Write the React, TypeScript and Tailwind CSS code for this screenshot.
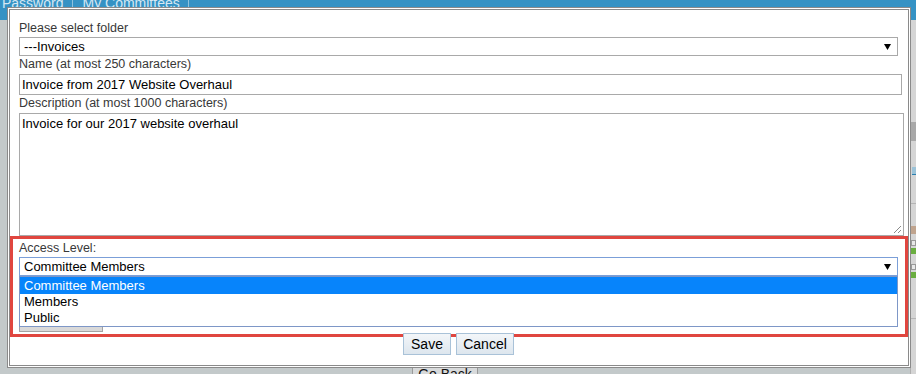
import React from "react";

const font = { fontFamily: '"Liberation Sans", Arial, sans-serif' };

function Arrow() {
  return (
    <svg width="7" height="7" viewBox="0 0 7 7" className="block">
      <path d="M0 1 L7 1 L3.5 7 Z" fill="#000" />
    </svg>
  );
}

function Label({ children, className = "" }: { children: React.ReactNode; className?: string }) {
  return <div className={"h-[15px] leading-[15px] text-[12.5px] text-[#383838] " + className}>{children}</div>;
}

export default function App() {
  return (
    <div style={font} className="relative w-[916px] h-[374px] overflow-hidden bg-[#c3c9ca]">
      {/* page behind the dialog */}
      <div className="h-[20px] bg-[#3592c4] flex items-start text-[14px] text-[#d6e8f3]">
        <div className="relative top-[-5px] pl-[2px] pr-[9px] border-r border-[#8ec2de] h-[20px] leading-[16px]">Password</div>
        <div className="relative top-[-5px] pl-[9px] pr-[8px] border-r border-[#8ec2de] h-[20px] leading-[16px]">My Committees</div>
      </div>
      <div className="absolute left-[910px] top-[20px] w-[6px] h-[354px] bg-[#d5d5d5] border-l border-[#b0b0b0]">
        <div className="mt-[102px] h-[19px] bg-[#a8a8a8]" />
        <div className="mt-[26px] ml-[1px] h-[8px] w-[4px] border-b border-[#2a7fb0] bg-[#9cc3d8]" />
        <div className="mt-[28px] h-px bg-[#b5b5b5]" />
        <div className="mt-[22px] h-[8px] w-[5px] bg-[#c0a48e]" />
        <div className="mt-[6px] h-[6px] w-[5px] bg-[#e8e8e8] border border-[#999]" />
        <div className="mt-[2px] h-[6px] w-[5px] bg-[#6aae40]" />
        <div className="mt-[10px] h-[6px] w-[5px] bg-[#e8e8e8] border border-[#999]" />
        <div className="mt-[2px] h-[6px] w-[5px] bg-[#6aae40]" />
        <div className="mt-[40px] h-px bg-[#b5b5b5]" />
      </div>
      <div className="absolute left-[412px] top-[360px] w-[66px] h-[24px] bg-[#d8dadb] border border-[#9a9a9a] text-center text-[14px] leading-[16px] pt-[5px] text-[#111]">
        Go Back
      </div>

      {/* dialog */}
      <div className="absolute left-[7px] top-[7px] w-[904px] h-[361px] bg-white border-[3px] border-double border-[#8a8a8a]">
        <div className="pl-[9px] pt-[11px] flex flex-col items-start">
          <Label>Please select folder</Label>
          <div className="mt-[1px] w-[879px] h-[19px] border border-[#a9a9a9] flex items-center justify-between pl-[4px] pr-[6px] text-[13px] text-black">
            <span>---Invoices</span>
            <Arrow />
          </div>

          <Label className="mt-[1px]">Name (at most 250 characters)</Label>
          <div className="mt-[2px] w-[883px] h-[21px] border border-[#a9a9a9] flex items-center pl-[2px] text-[13px] text-black">
            Invoice from 2017 Website Overhaul
          </div>

          <Label className="mt-[1px]">Description (at most 1000 characters)</Label>
          <div className="relative mt-[2px] w-[885px] h-[123px] border border-[#a9a9a9] pl-[2px] pt-[2px] text-[13px] leading-[16px] text-black">
            Invoice for our 2017 website overhaul
            <svg width="9" height="9" viewBox="0 0 9 9" className="absolute right-[1px] bottom-[1px]">
              <path d="M8 1 L1 8 M8 5 L5 8" stroke="#8a8a8a" strokeWidth="1" />
            </svg>
          </div>

          <Label className="mt-[5px]">Access Level:</Label>
          <div className="relative mt-[1px] w-[879px]">
            <div className="h-[19px] border border-[#7b9fd8] flex items-center justify-between pl-[4px] pr-[6px] text-[13px] text-black">
              <span>Committee Members</span>
              <Arrow />
            </div>
            <div className="absolute left-0 top-full z-20 w-[879px] bg-white border border-[#7e97c7] text-[13px] text-black">
              <div className="h-[17px] leading-[17px] pl-[4px] bg-[#0784fb] text-white">Committee Members</div>
              <div className="h-[16px] leading-[16px] pl-[4px]">Members</div>
              <div className="h-[16px] leading-[16px] pl-[4px]">Public</div>
            </div>
          </div>
          <div className="mt-[30px] w-[84px] h-[26px] bg-[#d9d9d9] border border-[#a3a3a3]" />

          <div className="relative z-20 mt-[1px] w-[879px] flex justify-center gap-[5px]">
            <button className="h-[22px] w-[48px] border border-[#a9c2d8] bg-gradient-to-b from-[#f3f6f9] to-[#dde6ee] text-[14px] text-black leading-[18px]">
              Save
            </button>
            <button className="h-[22px] w-[58px] border border-[#a9c2d8] bg-gradient-to-b from-[#f3f6f9] to-[#dde6ee] text-[14px] text-black leading-[18px]">
              Cancel
            </button>
          </div>
        </div>

        {/* highlight box */}
        <div className="absolute left-0 top-[226px] z-10 w-[898px] h-[101px] border-[3px] border-[#e0463f] pointer-events-none" />
      </div>
    </div>
  );
}
